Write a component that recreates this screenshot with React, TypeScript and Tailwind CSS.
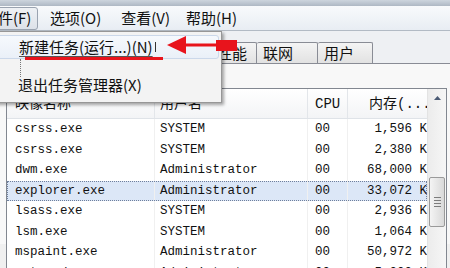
import React from 'react';

type Row = { n: string; u: string; c: string; m: string; sel?: boolean };

const rows: Row[] = [
  { n: 'csrss.exe', u: 'SYSTEM', c: '00', m: '1,596 K' },
  { n: 'csrss.exe', u: 'SYSTEM', c: '00', m: '2,380 K' },
  { n: 'dwm.exe', u: 'Administrator', c: '00', m: '68,000 K' },
  { n: 'explorer.exe', u: 'Administrator', c: '00', m: '33,072 K', sel: true },
  { n: 'lsass.exe', u: 'SYSTEM', c: '00', m: '2,936 K' },
  { n: 'lsm.exe', u: 'SYSTEM', c: '00', m: '1,064 K' },
  { n: 'mspaint.exe', u: 'Administrator', c: '00', m: '50,972 K' },
  { n: 'notepad.exe', u: 'Administrator', c: '00', m: '5,000 K' },
];

const tabs = [
  { t: '应用程序', w: 'w-[80px]' },
  { t: '进程', w: 'w-[60px]', sel: true },
  { t: '服务', w: 'w-[65px]' },
  { t: '性能', w: 'w-[46px]' },
  { t: '联网', w: 'w-[61px]' },
  { t: '用户', w: 'w-[55px]' },
];

export default function App() {
  return (
    <div className="relative w-[450px] h-[268px] overflow-hidden bg-[#f0f0f0] text-[#111] font-['Noto_Sans_CJK_SC',sans-serif]">
      {/* title strip */}
      <div className="h-[6px] bg-gradient-to-b from-[#cdd5de] to-[#aeb8c4]" />
      {/* menu bar */}
      <div className="flex items-center h-[24px] bg-gradient-to-b from-[#f8fafc] to-[#e8edf3] text-[15px] leading-[20px]">
        <div className="ml-[-25px] w-[63px] h-[23px] flex items-center pl-[7px] rounded-[3px] border border-[#9aa3b0] bg-gradient-to-b from-[#eef1f5] to-[#dde2e9]">
          文件(F)
        </div>
        <span className="ml-[12px]">选项(O)</span>
        <span className="ml-[20px]">查看(V)</span>
        <span className="ml-[16px]">帮助(H)</span>
      </div>
      {/* tabs area */}
      <div className="border-t border-[#b2bac4] bg-[#eef0f3]">
        <div className="flex items-end h-[33px] pl-[6px] border-b border-[#898c95]">
          {tabs.map((t) => (
            <div
              key={t.t}
              className={
                t.sel
                  ? `${t.w} h-[24px] mb-[-1px] flex items-center pl-[7px] text-[15px] leading-[20px] border border-b-0 border-[#898c95] bg-[#fafafa] rounded-t-[2px]`
                  : `${t.w} h-[21px] flex items-center pl-[6px] text-[15px] leading-[20px] border border-b-0 border-l-0 first:border-l border-[#898c95] bg-gradient-to-b from-[#f4f4f4] to-[#e2e2e2] rounded-t-[2px]`
              }
            >
              {t.t}
            </div>
          ))}
        </div>
      </div>
      {/* tab page */}
      <div className="bg-[#f8f8f8] h-[180px] pt-[24px]">
        <div className="ml-[6px] mr-[3px] h-[200px] flex border border-[#828790] bg-white font-['Liberation_Mono','Noto_Sans_CJK_SC',monospace]">
          <div className="w-[420px] flex flex-col">
            {/* header */}
            <div className="grid grid-cols-[148px_153px_40px_79px] h-[30px] bg-gradient-to-b from-white to-[#f3f4f6] border-b border-[#dfe3e8] text-[14px] leading-[18px]">
              <div className="flex items-center pl-[8px] border-r border-[#e3e6ea]">映像名称</div>
              <div className="flex items-center pl-[5px] border-r border-[#e3e6ea]">用户名</div>
              <div className="flex items-center pl-[7px] border-r border-[#e3e6ea]">CPU</div>
              <div className="flex items-center pl-[21px] whitespace-nowrap overflow-hidden">内存(...</div>
            </div>
            {/* rows */}
            {rows.map((r, i) => (
              <div
                key={i}
                className={
                  r.sel
                    ? 'grid grid-cols-[148px_153px_40px_79px] h-[20.5px] text-[12.5px] leading-[16px] bg-[#dce7f7] outline-1 outline-dotted outline-[#6f7f9c] -outline-offset-1'
                    : 'grid grid-cols-[148px_153px_40px_79px] h-[20.5px] text-[12.5px] leading-[16px]'
                }
              >
                <div className="flex items-center pl-[8px] border-r border-[#f0f0f0] whitespace-nowrap">{r.n}</div>
                <div className="flex items-center pl-[5px] border-r border-[#f0f0f0] whitespace-nowrap">{r.u}</div>
                <div className="flex items-center pl-[7px] border-r border-[#f0f0f0]">{r.c}</div>
                <div className="flex items-center justify-end whitespace-nowrap overflow-hidden">{r.m}</div>
              </div>
            ))}
          </div>
          {/* scrollbar */}
          <div className="w-[19px] flex flex-col border-l border-[#e3e3e3] bg-gradient-to-r from-[#ececec] to-[#f6f6f6]">
            <div className="h-[17px] flex items-center justify-center">
              <svg width="7" height="4" viewBox="0 0 7 4">
                <path d="M0 4 L3.5 0 L7 4 Z" fill="#4a5a74" />
              </svg>
            </div>
            <div className="mt-[71px] mx-[1px] h-[50px] rounded-[2px] border border-[#9a9a9a] bg-gradient-to-r from-[#f4f4f4] to-[#d9d9d9] flex flex-col items-center justify-center gap-[2px]">
              <div className="w-[7px] h-px bg-[#7c7c7c]" />
              <div className="w-[7px] h-px bg-[#7c7c7c]" />
              <div className="w-[7px] h-px bg-[#7c7c7c]" />
              <div className="w-[7px] h-px bg-[#7c7c7c]" />
            </div>
          </div>
        </div>
      </div>

      {/* File menu dropdown */}
      <div className="absolute left-[-10px] top-[31px] w-[232px] h-[72px] bg-[#f3f3f3] border border-[#979797] shadow-[2px_2px_3px_rgba(0,0,0,0.35)] text-[15px] leading-[20px]">
        <div className="mt-[3px] mx-[2px] h-[24px] flex items-center pl-[25px] rounded-[3px] border border-[#cbd8ea] bg-gradient-to-b from-[#f6f9fd] to-[#eaf0f8]">
          <span className="underline decoration-[#555] underline-offset-[3px]">新建任务(运行...)(N)</span>
          <span className="ml-[2px] w-px h-[10px] bg-[#333]" />
        </div>
        <div className="mt-[15px] h-[22px] flex items-center pl-[27px]">退出任务管理器(X)</div>
        <div className="absolute left-[29px] top-[27px] h-[18px] border-l border-dotted border-[#777]" />
      </div>

      {/* red annotations */}
      <div className="absolute left-[25px] top-[57px] w-[138px] h-[3px] bg-[#e8141c]" />
      <svg className="absolute left-[160px] top-[30px]" width="85" height="30" viewBox="0 0 85 30">
        <path d="M7 15 L26 6 L26 24 Z" fill="#e8141c" />
        <rect x="25" y="13.5" width="33" height="3" fill="#e8141c" />
        <rect x="56" y="10" width="21" height="11" fill="#e8141c" />
      </svg>
    </div>
  );
}
